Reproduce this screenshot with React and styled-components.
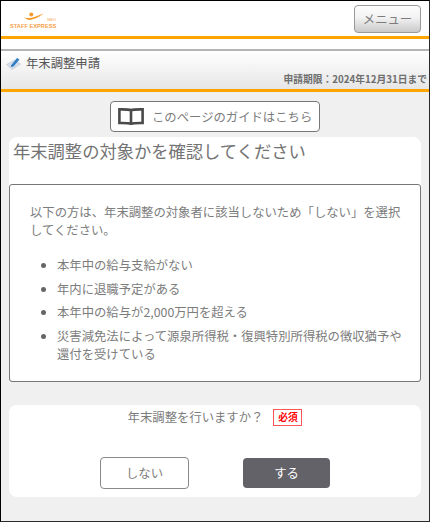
import styled, { createGlobalStyle } from "styled-components"

const GlobalStyle = createGlobalStyle`
  html, body {
    margin: 0;
    padding: 0;
    background: #f0f0f0;
  }
  * {
    box-sizing: border-box;
  }
`

const Frame = styled.div`
  width: 430px;
  height: 522px;
  overflow: hidden;
  display: flex;
  flex-direction: column;
  background: #f0f0f0;
  border: 1px solid #2a2a2a;
  border-top-color: #000;
  border-left-color: #000;
  font-family: "Noto Sans CJK JP", "Noto Sans", sans-serif;
  color: #7c7c7c;
`

const TopBar = styled.header`
  flex: none;
  height: 38px;
  display: flex;
  justify-content: space-between;
  padding: 4px 8px 0 9px;
  background: #fff;
  border-bottom: 3px solid #ffa500;
`

const Logo = styled.div`
  position: relative;
  width: 47px;
  height: 22px;
  margin-top: 7px;
`

const LogoMark = styled.svg`
  display: block;
  margin-left: 14px;
  width: 20px;
  height: 10px;
`

const LogoName = styled.div`
  margin-top: 1px;
  font-family: "Liberation Sans", Arial, sans-serif;
  font-size: 5.7px;
  line-height: 6px;
  font-weight: 700;
  color: #f5a04a;
  white-space: nowrap;
`

const LogoNeo = styled.span`
  position: absolute;
  right: 1px;
  top: 6px;
  font-family: "Liberation Sans", Arial, sans-serif;
  font-size: 4px;
  line-height: 4px;
  color: #f5a04a;
`

const MenuButton = styled.button`
  width: 67px;
  height: 28px;
  padding: 0;
  font-family: inherit;
  font-size: 12.35px;
  color: #7c7c7c;
  background: linear-gradient(#fdfdfd 0%, #f2f2f2 45%, #c9c9c9 100%);
  border: 1px solid #9a9a9a;
  border-radius: 4px;
`

const Gap = styled.div`
  flex: none;
  height: 10px;
  background: #fff;
`

const TitleBar = styled.div`
  flex: none;
  height: 43px;
  display: flex;
  flex-direction: column;
  padding: 3px 2px 0 5px;
  background: linear-gradient(#fff, #e6e6e6);
  border-top: 2px solid #b5b5b5;
  border-bottom: 3px solid #ffa500;
`

const TitleRow = styled.div`
  display: flex;
  align-items: center;
  gap: 5px;
  height: 18px;
`

const PageTitle = styled.h1`
  margin: 0;
  font-size: 12.35px;
  line-height: 18px;
  font-weight: 400;
  color: #555;
`

const Deadline = styled.div`
  font-size: 9.75px;
  line-height: 14px;
  font-weight: 700;
  color: #6e6e6e;
  text-align: right;
  white-space: nowrap;
`

const Main = styled.main`
  flex: 1;
  padding: 9px 8px 0;
`

const GuideButton = styled.button`
  width: 210px;
  height: 31px;
  margin: 0 auto 5px;
  padding: 0 0 0 7px;
  display: flex;
  align-items: center;
  gap: 8px;
  font-family: inherit;
  font-size: 12.35px;
  color: #7c7c7c;
  background: #fff;
  border: 1px solid #777;
  border-radius: 4px;
`

const Card = styled.section`
  background: #fff;
  border-radius: 8px;
`

const Heading = styled.h2`
  margin: 0;
  height: 47px;
  padding: 1px 0 0 4px;
  font-size: 17.3px;
  line-height: 26px;
  font-weight: 400;
  color: #737373;
`

const NoticeBox = styled.div`
  height: 198px;
  padding: 18px 16px 0 20px;
  border: 1px solid #777;
  border-radius: 3px;
  font-size: 12.35px;
  line-height: 18px;
`

const Lead = styled.p`
  margin: 0 0 17px;
`

const Conditions = styled.ul`
  margin: 0;
  padding: 0 0 0 27px;
`

const Condition = styled.li`
  margin-bottom: 5.6px;
  &::marker {
    color: #666;
  }
`

const AnswerCard = styled(Card)`
  height: 92px;
  margin-top: 23px;
  padding-top: 4px;
`

const Question = styled.div`
  display: flex;
  justify-content: center;
  align-items: center;
  gap: 10px;
  height: 17px;
  font-size: 12.35px;
  line-height: 17px;
`

const RequiredBadge = styled.span`
  width: 29px;
  height: 17px;
  font-size: 9.75px;
  line-height: 15px;
  font-weight: 700;
  text-align: center;
  color: #f00;
  background: #fff;
  border: 1px solid #f55;
`

const Choices = styled.div`
  display: flex;
  justify-content: center;
  align-items: center;
  gap: 54px;
  margin-top: 31px;
`

const Choice = styled.button`
  width: ${(p) => (p.$primary ? "87px" : "89px")};
  height: ${(p) => (p.$primary ? "30px" : "32px")};
  padding: 0;
  font-family: inherit;
  font-size: 12.35px;
  color: ${(p) => (p.$primary ? "#fff" : "#7c7c7c")};
  background: ${(p) => (p.$primary ? "#636268" : "#fff")};
  border: ${(p) => (p.$primary ? "none" : "1px solid #888")};
  border-radius: 4px;
`

const conditions = [
  "本年中の給与支給がない",
  "年内に退職予定がある",
  "本年中の給与が2,000万円を超える",
  "災害減免法によって源泉所得税・復興特別所得税の徴収猶予や還付を受けている",
]

const App = () => {
  return (
    <Frame>
      <GlobalStyle />
      <TopBar>
        <Logo>
          <LogoMark viewBox="0 0 22 10">
            <circle cx="8" cy="2.2" r="2.2" fill="#f39a2b" />
            <path d="M0 5.5 C5 10 11 9 22 1 C15 4 10 6 7 6 C4 6 2 6 0 5.5 Z" fill="#f39a2b" />
          </LogoMark>
          <LogoName>STAFF EXPRESS</LogoName>
          <LogoNeo>NEO</LogoNeo>
        </Logo>
        <MenuButton>メニュー</MenuButton>
      </TopBar>
      <Gap />
      <TitleBar>
        <TitleRow>
          <svg width="15" height="14" viewBox="0 0 15 14">
            <path d="M0.5 8.5 L9 4 L14.5 8 L6 13.5 Z" fill="#d5deea" stroke="#b9c4d0" strokeWidth="0.6" />
            <path d="M5 9.5 L11 2 L13.5 3.5 L7.5 10.5 L4.8 11 Z" fill="#2f7fc6" />
          </svg>
          <PageTitle>年末調整申請</PageTitle>
        </TitleRow>
        <Deadline>申請期限：2024年12月31日まで</Deadline>
      </TitleBar>
      <Main>
        <GuideButton>
          <svg width="26" height="17" viewBox="0 0 26 17">
            <path
              d="M13 2.2 C11 1.4 8 1.3 1.4 1.4 V15 C8 14.9 11 15 13 15.8 C15 15 18 14.9 24.6 15 V1.4 C18 1.3 15 1.4 13 2.2 Z M13 2.2 V15.8"
              fill="none"
              stroke="#4a4a4a"
              strokeWidth="2.6"
            />
          </svg>
          このページのガイドはこちら
        </GuideButton>
        <Card>
          <Heading>年末調整の対象かを確認してください</Heading>
          <NoticeBox>
            <Lead>以下の方は、年末調整の対象者に該当しないため「しない」を選択してください。</Lead>
            <Conditions>
              {conditions.map((text) => (
                <Condition key={text}>{text}</Condition>
              ))}
            </Conditions>
          </NoticeBox>
        </Card>
        <AnswerCard>
          <Question>
            年末調整を行いますか？
            <RequiredBadge>必須</RequiredBadge>
          </Question>
          <Choices>
            <Choice>しない</Choice>
            <Choice $primary>する</Choice>
          </Choices>
        </AnswerCard>
      </Main>
    </Frame>
  )
}

export default App
